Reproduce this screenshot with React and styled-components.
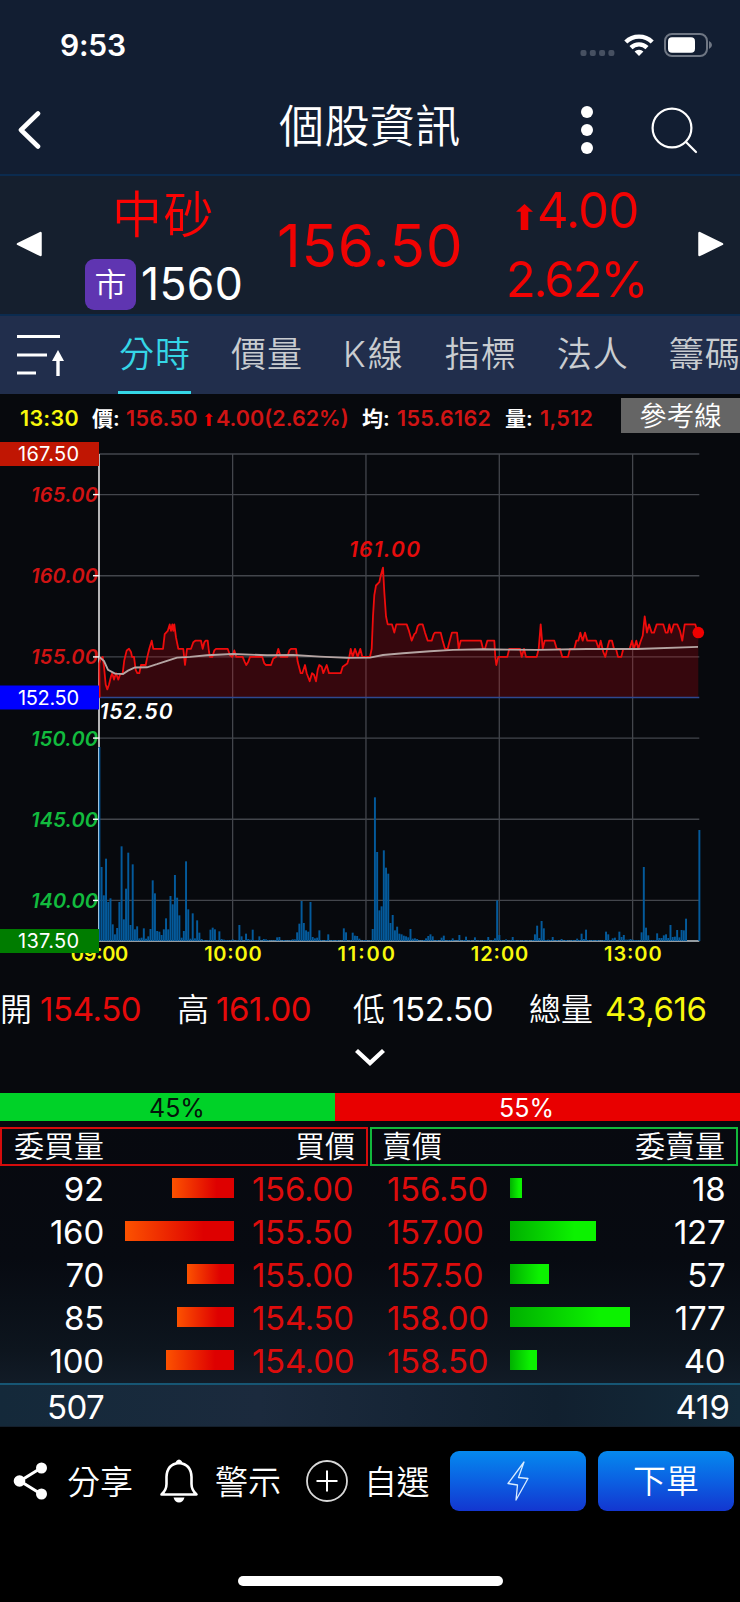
import styled, { createGlobalStyle, ThemeProvider } from 'styled-components';

const theme = {
    colors: {
        up: '#e60a0a',
        down: '#12b83c',
        yellow: '#f8f80c',
        cyan: '#35d6e6',
        white: '#ffffff',
        line: '#0b2b4f',
    },
    fonts: {
        base: `Inter, 'Noto Sans CJK TC', sans-serif`,
    },
};

const GlobalStyle = createGlobalStyle`
    * { box-sizing: border-box; }
    body {
        margin: 0;
        background: #000;
        font-family: ${({ theme }) => theme.fonts.base};
        color: #fff;
    }
    svg { display: block; flex: none; }
`;

const Screen = styled.main`
    width: 740px;
    height: 1602px;
    overflow: hidden;
    display: flex;
    flex-direction: column;
    background: #07090d;
`;

/* 文字 */
const Text = styled.span`
    display: block;
    white-space: nowrap;
    line-height: 1;
    font-size: ${({ $size }) => $size}px;
    font-weight: ${({ $weight }) => $weight || 400};
    letter-spacing: ${({ $spacing }) => $spacing || 0}px;
    color: ${({ $color, theme }) => theme.colors[$color] || $color || theme.colors.white};
`;

/* 狀態列 */
const StatusBar = styled.div`
    height: 90px;
    padding: 0 28px 0 60px;
    display: flex;
    align-items: center;
    justify-content: space-between;
    background: #121e32;
`;

const StatusIcons = styled.div`
    display: flex;
    align-items: center;
    gap: 9px;
`;

/* 標題列 */
const Header = styled.header`
    height: 86px;
    padding: 0 42px 5px 17px;
    display: grid;
    grid-template-columns: 262px 1fr 14px 104px;
    align-items: center;
    background: #121e32;
    border-bottom: 2px solid ${({ theme }) => theme.colors.line};

    svg:last-child {
        justify-self: end;
    }
`;

const Title = styled.h1`
    margin: 0 0 7px;
    font-size: 45px;
    line-height: 1;
    font-weight: 350;
    letter-spacing: 0.4px;
`;

/* 報價區 */
const Quote = styled.section`
    height: 138px;
    padding: 0 16px;
    display: grid;
    grid-template-columns: 69px 192px 229px 192px 1fr;
    background: #151f2e;
`;

const Arrow = styled.div`
    padding-top: 55px;
`;

const StockName = styled.div`
    padding-top: 14px;
    display: flex;
    flex-direction: column;
    gap: 19px;
`;

const NameLine = styled.div`
    padding-left: 27px;
`;

const StockCode = styled.div`
    display: flex;
    align-items: center;
    gap: 5px;
`;

const MarketBadge = styled.span`
    width: 51px;
    height: 51px;
    border-radius: 9px;
    display: flex;
    align-items: center;
    justify-content: center;
    background: #5f35b1;
    font-size: 32px;
    line-height: 1;
    font-weight: 350;
`;

const Price = styled.div`
    padding-top: 41px;
`;

const Change = styled.div`
    padding-top: 10px;
    display: flex;
    flex-direction: column;
    gap: 20px;
`;

const ChangeLine = styled.div`
    display: flex;
    gap: 4px;
    padding-left: ${({ $indent }) => $indent || 0}px;
`;

const ArrowSlot = styled.div`
    padding-top: ${({ $top }) => $top}px;
`;

/* 分頁 */
const Tabs = styled.nav`
    height: 80px;
    padding-left: 16px;
    display: flex;
    align-items: center;
    overflow: hidden;
    background: #212e4c;
    border-top: 2px solid ${({ theme }) => theme.colors.line};
`;

const TabList = styled.div`
    display: flex;
    height: 78px;
    gap: 39px;
    margin-left: 54px;
`;

const Tab = styled.div`
    flex: none;
    height: 78px;
    padding: 21px 0 0 1px;
    font-size: 35px;
    line-height: 35px;
    font-weight: 350;
    letter-spacing: ${({ $spacing }) => $spacing || 1}px;
    color: ${({ $active, theme }) => ($active ? theme.colors.cyan : '#c9ccd0')};
    border-bottom: 3px solid ${({ $active, theme }) => ($active ? theme.colors.cyan : 'transparent')};
`;

/* 即時資訊列 */
const InfoRow = styled.div`
    height: 42px;
    padding: 4px 0 0 20px;
    display: grid;
    grid-template-columns: 72px 34px 79px 11px 146px 35px 108px 35px 81px 119px;
    align-items: start;
`;

const InfoText = styled(Text)`
    padding-top: 10px;
`;

const RefButton = styled.button`
    height: 35px;
    padding: 2px 0 0;
    border: 0;
    background: #656565;
    color: #fff;
    font: 350 27.5px/33px ${({ theme }) => theme.fonts.base};
`;

/* 開高低量 */
const StatsRow = styled.div`
    height: 52px;
    padding-top: 7px;
    display: grid;
    grid-template-columns: 40px 137px 39px 137px 39px 137px 76px 1fr;
    align-items: center;
`;

// 標籤與數值直接排入父層的格線
const Stat = styled.div`
    display: contents;
`;

const Expand = styled.div`
    height: 61px;
    display: flex;
    justify-content: center;
    padding-top: 16px;
`;

const RatioBar = styled.div`
    height: 28px;
    display: flex;
`;

const RatioPart = styled.div`
    width: ${({ $width }) => $width}px;
    padding-left: ${({ $indent }) => $indent}px;
    display: flex;
    align-items: center;
    padding-top: 2px;
    background: ${({ $bg }) => $bg};
`;

/* 五檔 */
const Depth = styled.section`
    height: 306px;
    padding-top: 6px;
    background: linear-gradient(#07090f 0%, #070a11 45%, #0d151e 75%, #141f2c 92%);
`;

const DepthHead = styled.div`
    display: flex;
    gap: 2px;
`;

const HeadBox = styled.div`
    width: 368px;
    height: 39px;
    padding: 0 11px 1px ${({ $indent }) => $indent}px;
    display: flex;
    align-items: center;
    justify-content: space-between;
    border: 2px solid ${({ $color }) => $color};
`;

const DepthRow = styled.div`
    height: 43.1px;
    display: grid;
    grid-template-columns: 104px 130px 18px 117px 18px 123px 120px 95.5px;
    align-items: center;
    padding-top: 3px;
`;

const RightText = styled(Text)`
    justify-self: end;
`;

const Bar = styled.div`
    height: 20px;
    margin-top: -2px;
    justify-self: ${({ $side }) => ($side === 'buy' ? 'end' : 'start')};
    background: ${({ $side }) =>
        $side === 'buy'
            ? 'linear-gradient(90deg, #fc5200 0%, #de0000 72%)'
            : 'linear-gradient(90deg, #00b000 0%, #0cf200 75%)'};
`;

const Total = styled.div`
    height: 42.5px;
    margin-top: 2px;
    padding: 3px 10px 0 47px;
    display: flex;
    align-items: center;
    justify-content: space-between;
    background: linear-gradient(90deg, #14293a, #1b2a3d 35%, #11202f 75%, #132a3a);
    border-top: 2px solid #175674;
`;

/* 底部工具列 */
const Footer = styled.footer`
    flex: 1;
    background: #000;
    padding-top: 24px;
    display: flex;
    flex-direction: column;
    align-items: center;
`;

const Actions = styled.div`
    width: 740px;
    height: 60px;
    padding: 0 6px 0 13px;
    display: grid;
    grid-template-columns: 54px 92px 56px 90px 59px 86px 136px 136px;
    align-items: center;

    button + button {
        margin-left: 12px;
    }
`;

const ActionText = styled(Text)`
    padding-top: 2px;
`;

const OrderButton = styled.button`
    width: 136px;
    height: 60px;
    padding: 0;
    border: 0;
    border-radius: 9px;
    display: flex;
    align-items: center;
    justify-content: center;
    font-family: inherit;
    background: linear-gradient(#0589ee, #0b60e2 50%, #1336d0);
`;

const HomeIndicator = styled.div`
    width: 265px;
    height: 10px;
    margin-top: 65px;
    border-radius: 5px;
    background: #fff;
`;

/* ---- 走勢圖資料 ---- */
const LEFT = 99.3;
const RIGHT = 699.3;
const MINUTE = 2.2222;
const BASE = 505;
const TOP = 18;
const priceY = (p) => TOP + ((167.5 - p) * 487) / 30;

const morning = [
    [298, 154.6], [302, 154.9], [308, 155], [312, 154.4], [317, 153.3], [322, 153], [327, 153.3], [333, 153.8],
    [337, 154], [342, 153.6], [348, 154], [355, 153.6], [360, 153.9], [368, 154], [373, 154.8], [380, 155.4],
    [387, 155.5], [393, 155.3], [396, 155], [402, 155], [407, 154.2], [412, 154], [418, 154], [423, 154.5],
    [437, 154.5], [442, 155], [448, 155.5], [455, 156], [460, 155.5], [489, 155.5], [494, 156.4], [503, 156.6],
    [509, 157], [513, 156.6], [517, 157], [520, 156.6], [523, 157], [528, 156.2], [535, 155.5], [550, 155.5],
    [555, 154.5], [561, 155.5], [573, 155.5], [580, 155.9], [586, 156], [603, 156], [608, 155.5], [613, 155.9],
    [617, 156], [623, 156], [627, 155.3], [630, 155], [637, 155], [643, 155.4], [648, 155.5], [683, 155.5],
    [690, 155.1], [697, 155], [703, 155.4], [709, 155], [728, 155], [734, 154.7], [739, 154.5], [745, 154.7],
    [750, 155], [787, 155], [793, 154.6], [798, 154.5], [813, 154.5], [820, 154.9], [828, 155], [835, 155.5],
    [842, 155], [862, 155], [868, 155.4], [873, 155.5], [888, 155.5], [893, 154.7], [902, 154], [907, 154],
    [915, 154.5], [920, 154], [929, 153.5], [936, 154], [942, 153.9], [948, 153.5], [953, 154.2], [958, 154.5],
    [965, 154.4], [970, 154], [980, 154.5], [987, 154], [1022, 154], [1028, 154.4], [1042, 154.6], [1048, 155],
    [1052, 155.5], [1058, 155], [1065, 155.5], [1073, 155], [1081, 155.5], [1087, 155],
];

const afternoon = [
    [0, 155], [5, 155.5], [9, 157.5], [13, 158.8], [18, 159.4], [28, 159.6], [32, 160], [39, 160.5], [43, 159],
    [48, 157.5], [53, 157], [66, 157], [73, 156.5], [79, 157], [110, 157], [117, 156.6], [125, 156], [133, 156.4],
    [138, 156.5], [143, 156.9], [148, 157], [158, 157], [165, 156.5], [173, 156], [185, 156], [191, 156.4],
    [195, 156.5], [212, 156.5], [218, 156], [225, 155.5], [233, 155.5], [239, 156], [246, 156.5], [261, 156.5],
    [266, 155.5], [272, 156], [333, 156], [339, 155.5], [345, 155.5], [352, 156], [373, 156], [376, 155],
    [379, 154.5], [385, 155], [412, 155], [418, 155.5], [450, 155.5], [455, 155], [462, 155.5], [468, 155],
    [500, 155], [506, 155.5], [512, 157], [518, 155.5], [524, 156], [553, 156], [560, 155.5], [570, 155.5],
    [577, 155], [594, 155], [600, 155.5], [613, 155.5], [619, 156], [625, 156], [631, 156.5], [638, 156],
    [645, 156.5], [652, 156], [678, 156], [686, 155.5], [692, 156], [700, 155.3], [706, 155], [714, 155.7],
    [718, 156], [726, 156], [732, 155.5], [738, 155.5], [744, 155], [754, 155], [760, 155.5], [779, 155.5],
    [786, 156], [792, 155.5], [799, 156], [805, 155.5], [811, 155.9], [818, 156.3], [824, 157.5], [831, 156.5],
    [837, 157], [845, 156.5], [852, 156.5], [860, 157], [880, 157], [887, 156.5], [893, 156.5], [898, 157],
    [904, 156.5], [911, 157], [922, 157], [930, 156.6], [937, 156], [944, 157], [976, 157], [980, 156.7],
    [985, 156.5],
];

const averages = [
    [99.3, 155], [104, 154.75], [108, 154.2], [115, 153.97], [123, 153.95], [128, 154.15], [135, 154.35],
    [147, 154.36], [157, 154.55], [167, 154.76], [177, 154.96], [190, 155], [207, 155.1], [233, 155.18],
    [267, 155.1], [293, 155.12], [320, 155.02], [347, 154.94], [370, 154.96], [383, 155.12], [403, 155.23],
    [430, 155.35], [453, 155.43], [483, 155.47], [537, 155.43], [587, 155.49], [637, 155.49], [698, 155.62],
];

// 每分鐘成交量
const volumes = [
    582, 222, 137, 247, 117, 128, 50, 20, 39, 117, 284, 65, 157, 265, 48, 230, 35, 44, 8, 10, 38, 7, 14, 36, 182,
    143, 30, 28, 18, 35, 68, 35, 135, 110, 198, 130, 77, 10, 30, 239, 95, 7, 83, 8, 62, 25, 6, 3, 2, 3, 34, 40, 35,
    3, 29, 6, 4, 3, 3, 3, 5, 2, 3, 48, 14, 2, 22, 6, 4, 34, 3, 3, 14, 2, 6, 5, 3, 2, 2, 2, 11, 12, 2, 3, 2, 2, 3, 5,
    5, 26, 52, 120, 54, 32, 28, 117, 12, 8, 10, 32, 3, 2, 3, 20, 2, 3, 2, 3, 2, 2, 38, 26, 2, 3, 25, 16, 15, 7, 2,
    3, 3, 2, 3, 36, 431, 267, 92, 104, 272, 220, 202, 54, 78, 32, 43, 22, 20, 16, 14, 11, 36, 7, 8, 6, 2, 2, 3, 8,
    15, 20, 14, 2, 3, 2, 10, 16, 2, 3, 3, 8, 2, 2, 18, 2, 3, 13, 2, 3, 2, 11, 2, 3, 2, 3, 3, 12, 2, 3, 8, 122, 18,
    3, 2, 5, 2, 3, 12, 3, 2, 3, 2, 3, 2, 3, 2, 3, 20, 46, 9, 60, 38, 3, 4, 3, 12, 2, 3, 2, 6, 2, 3, 2, 2, 3, 2, 7,
    3, 22, 6, 34, 3, 2, 3, 2, 3, 2, 2, 3, 28, 20, 3, 8, 10, 2, 28, 12, 18, 4, 4, 6, 4, 3, 3, 3, 26, 222, 40, 17, 3,
    3, 3, 23, 9, 9, 17, 20, 9, 48, 12, 13, 33, 11, 33, 32, 67, 0, 0, 0, 0, 0, 333,
];

const priceLine = [
    ...morning.map(([x, p]) => [x / 3, p]),
    ...afternoon.map(([x, p]) => [370 + x / 3, p]),
];
const toPoints = (list) => list.map(([x, p]) => `${x.toFixed(1)},${priceY(p).toFixed(1)}`).join(' ');

const hours = ['09:00', '10:00', '11:00', '12:00', '13:00'];
const axis = [165, 160, 155, 150, 145, 140];
const limits = [
    { value: 167.5, color: '#c01603' },
    { value: 152.5, color: '#0000ff' },
    { value: 137.5, color: '#007c00' },
];

const ChartSvg = styled.svg`
    text {
        font-family: ${({ theme }) => theme.fonts.base};
    }
`;

const AxisText = styled.text`
    font-size: 20px;
    font-style: italic;
    font-weight: 600;
    fill: ${({ $up }) => ($up ? '#d01313' : '#12bb3e')};
`;

const HourText = styled.text`
    font-size: 20px;
    font-weight: 600;
    fill: ${({ theme }) => theme.colors.yellow};
`;

const MarkText = styled.text`
    font-size: 21px;
    font-style: italic;
    font-weight: 600;
    fill: ${({ $fill }) => $fill};
`;

const LimitText = styled.text`
    font-size: 20px;
    fill: #fff;
`;

function Chart() {
    return (
        <ChartSvg width="740" height="544" viewBox="0 0 740 544">
            {axis.map((v) => (
                <AxisText key={v} $up={v > 152.5} x="31" y={priceY(v) + 7.5} textLength="67">
                    {v.toFixed(2)}
                </AxisText>
            ))}
            <g stroke="#43464c" strokeWidth="1.3">
                {[167.5, ...axis].map((v) => (
                    <line key={v} x1={LEFT} x2={RIGHT} y1={priceY(v)} y2={priceY(v)} />
                ))}
                {[1, 2, 3, 4].map((h) => (
                    <line key={h} x1={LEFT + h * 133.33} x2={LEFT + h * 133.33} y1={TOP} y2={BASE} />
                ))}
            </g>
            <g stroke="#fff" strokeWidth="1.4">
                {axis.map((v) => (
                    <line key={v} x1="93" x2={LEFT} y1={priceY(v)} y2={priceY(v)} />
                ))}
                <line x1="99" x2="99" y1={TOP} y2={BASE} />
            </g>
            <line x1="99" x2={RIGHT} y1={BASE} y2={BASE} stroke="#c4ccd2" strokeWidth="1.4" />
            {volumes.map((v, i) => (
                <rect
                    key={i}
                    x={LEFT + i * MINUTE - 0.9}
                    y={BASE - v / 3}
                    width="1.95"
                    height={v / 3}
                    fill="#045a9b"
                />
            ))}
            <line x1="98.5" x2="98.5" y1="312" y2={BASE} stroke="#9fc4de" />
            <polygon
                points={`99.3,${priceY(152.5)} ${toPoints(priceLine)} 698.3,${priceY(152.5)}`}
                fill="#d2060f"
                fillOpacity="0.23"
            />
            <line x1={LEFT} x2={RIGHT} y1={priceY(152.5)} y2={priceY(152.5)} stroke="#2f4890" strokeWidth="1.3" />
            <polyline
                points={`99.6,${priceY(152.5)} ${toPoints(priceLine)}`}
                fill="none"
                stroke="#ee0c0c"
                strokeWidth="1.8"
                strokeLinejoin="round"
            />
            <polyline points={toPoints(averages)} fill="none" stroke="#b5a5a3" strokeWidth="1.9" />
            <circle cx="698.3" cy={priceY(156.5)} r="5.8" fill="#f00000" />

            <MarkText $fill="#e60c0c" x="349" y="120.5" textLength="71">161.00</MarkText>
            <MarkText $fill="#fff" x="99.5" y="282.5" textLength="73">152.50</MarkText>

            {hours.map((h, i) => (
                <HourText key={h} x={LEFT + i * 133.33 - 28.5} y="524.5" textLength="57.5">
                    {h}
                </HourText>
            ))}
            {limits.map(({ value, color }) => (
                <g key={value}>
                    <rect x="0" y={priceY(value) - 12} width="99" height="24" fill={color} />
                    <LimitText x="18" y={priceY(value) + 7.2} textLength="61">
                        {value.toFixed(2)}
                    </LimitText>
                </g>
            ))}
        </ChartSvg>
    );
}

const UpArrow = ({ width, height }) => (
    <svg width={width} height={height} viewBox="0 0 18 27" preserveAspectRatio="none">
        <path d="M9 0 L18 8 H13 V27 H5 V8 H0 Z" fill="#f00000" />
    </svg>
);

const rows = [
    { buy: 92, buyBar: 62, bid: '156.00', ask: '156.50', sellBar: 12, sell: 18 },
    { buy: 160, buyBar: 109, bid: '155.50', ask: '157.00', sellBar: 86, sell: 127 },
    { buy: 70, buyBar: 47, bid: '155.00', ask: '157.50', sellBar: 39, sell: 57 },
    { buy: 85, buyBar: 57, bid: '154.50', ask: '158.00', sellBar: 120, sell: 177 },
    { buy: 100, buyBar: 68, bid: '154.00', ask: '158.50', sellBar: 27, sell: 40 },
];

const stats = [
    { label: '開', value: '154.50', color: 'up' },
    { label: '高', value: '161.00', color: 'up' },
    { label: '低', value: '152.50', color: 'white' },
    { label: '總量', value: '43,616', color: 'yellow' },
];

export default function App() {
    return (
        <ThemeProvider theme={theme}>
            <GlobalStyle />
            <Screen>
                <StatusBar>
                    <Text $size={30} $weight={600} $spacing={-0.2}>9:53</Text>
                    <StatusIcons>
                        <svg width="35" height="24" viewBox="0 0 35 24">
                            {[0, 9.3, 18.6, 27.9].map((x) => (
                                <rect key={x} x={x + 0.5} y="17" width="6" height="6" rx="2" fill="#465061" />
                            ))}
                        </svg>
                        <svg width="30" height="24" viewBox="0 0 30 24">
                            <g fill="none" stroke="#fff" strokeWidth="4.4">
                                <path d="M1.8 9 A19 19 0 0 1 28.2 9" />
                                <path d="M7 14.6 A11.6 11.6 0 0 1 23 14.6" />
                            </g>
                            <path d="M15 23 L10.6 18.4 A6.4 6.4 0 0 1 19.4 18.4 Z" fill="#fff" />
                        </svg>
                        <svg width="49" height="24" viewBox="0 0 49 24">
                            <rect x="2" y="1" width="42" height="22" rx="7" fill="none" stroke="#6f7784" strokeWidth="2" />
                            <rect x="5" y="4.3" width="27" height="15.4" rx="4" fill="#fff" />
                            <path d="M46 8 Q49 9.5 49 12 Q49 14.5 46 16 Z" fill="#6f7784" />
                        </svg>
                    </StatusIcons>
                </StatusBar>

                <Header>
                    <svg width="24" height="40" viewBox="0 0 24 40">
                        <path d="M21 3.5 L4 20 L21 36.5" fill="none" stroke="#fff" strokeWidth="4.6" strokeLinecap="round" strokeLinejoin="round" />
                    </svg>
                    <Title>個股資訊</Title>
                    <svg width="14" height="50" viewBox="0 0 14 50">
                        {[7, 25, 43].map((y) => (
                            <circle key={y} cx="7" cy={y} r="6" fill="#fff" />
                        ))}
                    </svg>
                    <svg width="48" height="48" viewBox="0 0 48 48">
                        <g fill="none" stroke="#fff" strokeWidth="2.2" strokeLinecap="round">
                            <circle cx="22" cy="22" r="19.4" />
                            <path d="M36 36 L46 46" />
                        </g>
                    </svg>
                </Header>

                <Quote>
                    <Arrow>
                        <svg width="27" height="27" viewBox="0 0 27 27">
                            <path d="M24.5 2 V24 L2 13 Z" fill="#fff" stroke="#fff" strokeWidth="2.5" strokeLinejoin="round" />
                        </svg>
                    </Arrow>
                    <StockName>
                        <NameLine>
                            <Text $size={50} $weight={350} $color="#fb0303" $spacing={1.6}>中砂</Text>
                        </NameLine>
                        <StockCode>
                            <MarketBadge>市</MarketBadge>
                            <Text $size={44.5} $spacing={0.3}>1560</Text>
                        </StockCode>
                    </StockName>
                    <Price>
                        <Text $size={58.5} $color="#f00303" $spacing={0.7}>156.50</Text>
                    </Price>
                    <Change>
                        <ChangeLine $indent={10}>
                            <ArrowSlot $top={18}>
                                <UpArrow width={17} height={26} />
                            </ArrowSlot>
                            <Text $size={49} $color="#f00303" $spacing={-0.8}>4.00</Text>
                        </ChangeLine>
                        <ChangeLine>
                            <Text $size={49} $color="#f00303" $spacing={-2.1}>2.62%</Text>
                        </ChangeLine>
                    </Change>
                    <Arrow>
                        <svg width="27" height="27" viewBox="0 0 27 27">
                            <path d="M1.5 2 V24 L24 13 Z" fill="#fff" stroke="#fff" strokeWidth="2.5" strokeLinejoin="round" />
                        </svg>
                    </Arrow>
                </Quote>

                <Tabs>
                    <svg width="48" height="44" viewBox="0 0 48 44">
                        <g stroke="#fff" strokeWidth="3">
                            <path d="M1 3.5 H44 M1 22 H31 M1 40 H20" />
                            <path d="M42 43 V22" strokeWidth="3.4" />
                        </g>
                        <path d="M42 17 L48 28 H36 Z" fill="#fff" />
                    </svg>
                    <TabList>
                        <Tab $active>分時</Tab>
                        <Tab>價量</Tab>
                        <Tab $spacing={2}>K線</Tab>
                        <Tab>指標</Tab>
                        <Tab>法人</Tab>
                        <Tab>籌碼</Tab>
                    </TabList>
                </Tabs>

                <InfoRow>
                    <InfoText $size={21.5} $weight={600} $color="yellow" $spacing={0.3}>13:30</InfoText>
                    <InfoText $size={21} $weight={600}>價:</InfoText>
                    <InfoText $size={21.5} $weight={600} $color="#d01414" $spacing={0.3}>156.50</InfoText>
                    <ArrowSlot $top={15}>
                        <UpArrow width={8} height={13} />
                    </ArrowSlot>
                    <InfoText $size={21.5} $weight={600} $color="#d01414">4.00(2.62%)</InfoText>
                    <InfoText $size={21} $weight={600}>均:</InfoText>
                    <InfoText $size={21.5} $weight={600} $color="#d01414" $spacing={0.3}>155.6162</InfoText>
                    <InfoText $size={21} $weight={600}>量:</InfoText>
                    <InfoText $size={21.5} $weight={600} $color="#d01414" $spacing={0.3}>1,512</InfoText>
                    <RefButton>參考線</RefButton>
                </InfoRow>

                <Chart />

                <StatsRow>
                    {stats.map(({ label, value, color }) => (
                        <Stat key={label}>
                            <Text $size={32} $weight={350}>{label}</Text>
                            <Text $size={33} $color={color} $spacing={-0.4}>{value}</Text>
                        </Stat>
                    ))}
                </StatsRow>
                <Expand>
                    <svg width="32" height="20" viewBox="0 0 32 20">
                        <path d="M2.5 2.5 L16 15 L29.5 2.5" fill="none" stroke="#fff" strokeWidth="4.4" />
                    </svg>
                </Expand>

                <RatioBar>
                    <RatioPart $width={335} $indent={149} $bg="#00d228">
                        <Text $size={25} $color="#04140a">45%</Text>
                    </RatioPart>
                    <RatioPart $width={405} $indent={164} $bg="#e80000">
                        <Text $size={25}>55%</Text>
                    </RatioPart>
                </RatioBar>

                <Depth>
                    <DepthHead>
                        <HeadBox $color="#d40c0c" $indent={12}>
                            <Text $size={30} $weight={350}>委買量</Text>
                            <Text $size={30} $weight={350}>買價</Text>
                        </HeadBox>
                        <HeadBox $color="#12b83c" $indent={10}>
                            <Text $size={30} $weight={350}>賣價</Text>
                            <Text $size={30} $weight={350}>委賣量</Text>
                        </HeadBox>
                    </DepthHead>
                    {rows.map((row) => (
                        <DepthRow key={row.bid}>
                            <RightText $size={33} $spacing={-0.2}>{row.buy}</RightText>
                            <Bar $side="buy" style={{ width: row.buyBar }} />
                            <span />
                            <Text $size={33} $color="#dc0c0c" $spacing={-0.3}>{row.bid}</Text>
                            <span />
                            <Text $size={33} $color="#dc0c0c" $spacing={-0.3}>{row.ask}</Text>
                            <Bar $side="sell" style={{ width: row.sellBar }} />
                            <RightText $size={33} $spacing={-0.2}>{row.sell}</RightText>
                        </DepthRow>
                    ))}
                    <Total>
                        <Text $size={33} $spacing={-0.6}>507</Text>
                        <Text $size={33} $spacing={0}>419</Text>
                    </Total>
                </Depth>

                <Footer>
                    <Actions>
                        <svg width="36" height="40" viewBox="0 0 36 40">
                            <path d="M28 7 L7 20 L28 33" fill="none" stroke="#fff" strokeWidth="3" />
                            <circle cx="28.5" cy="7" r="5.5" fill="#fff" />
                            <circle cx="6.5" cy="20" r="5.8" fill="#fff" />
                            <circle cx="28.5" cy="33" r="5.5" fill="#fff" />
                        </svg>
                        <ActionText $size={33} $weight={350}>分享</ActionText>
                        <svg width="42" height="44" viewBox="0 0 42 44">
                            <path d="M2.5 35.5 Q7.5 31 7.5 25 V18 Q8 5 20 4 Q32 5 32.5 18 V25 Q32.5 31 37.5 35.5 Z" fill="none" stroke="#fff" strokeWidth="2.6" strokeLinejoin="round" />
                            <path d="M16.5 4 Q17 1 20 0.5 Q23 1 23.5 4 Z M14.5 38.5 H25.5 Q24 43.5 20 43.5 Q16 43.5 14.5 38.5 Z" fill="#fff" />
                        </svg>
                        <ActionText $size={33} $weight={350}>警示</ActionText>
                        <svg width="44" height="44" viewBox="0 0 44 44">
                            <circle cx="22" cy="22" r="20" fill="none" stroke="#d8d8d8" strokeWidth="1.8" />
                            <path d="M22 11.5 V32.5 M11.5 22 H32.5" stroke="#fff" strokeWidth="2" />
                        </svg>
                        <ActionText $size={33} $weight={350} $spacing={-0.5}>自選</ActionText>
                        <OrderButton>
                            <svg width="22" height="42" viewBox="0 0 22 42">
                                <path d="M17 2 L1 23.5 L10.5 25 L9 40 L21 18.5 L11.5 17.5 Z" fill="none" stroke="#d8ecff" strokeWidth="1.3" strokeLinejoin="round" />
                            </svg>
                        </OrderButton>
                        <OrderButton>
                            <Text $size={33} $weight={350}>下單</Text>
                        </OrderButton>
                    </Actions>
                    <HomeIndicator />
                </Footer>
            </Screen>
        </ThemeProvider>
    );
}
